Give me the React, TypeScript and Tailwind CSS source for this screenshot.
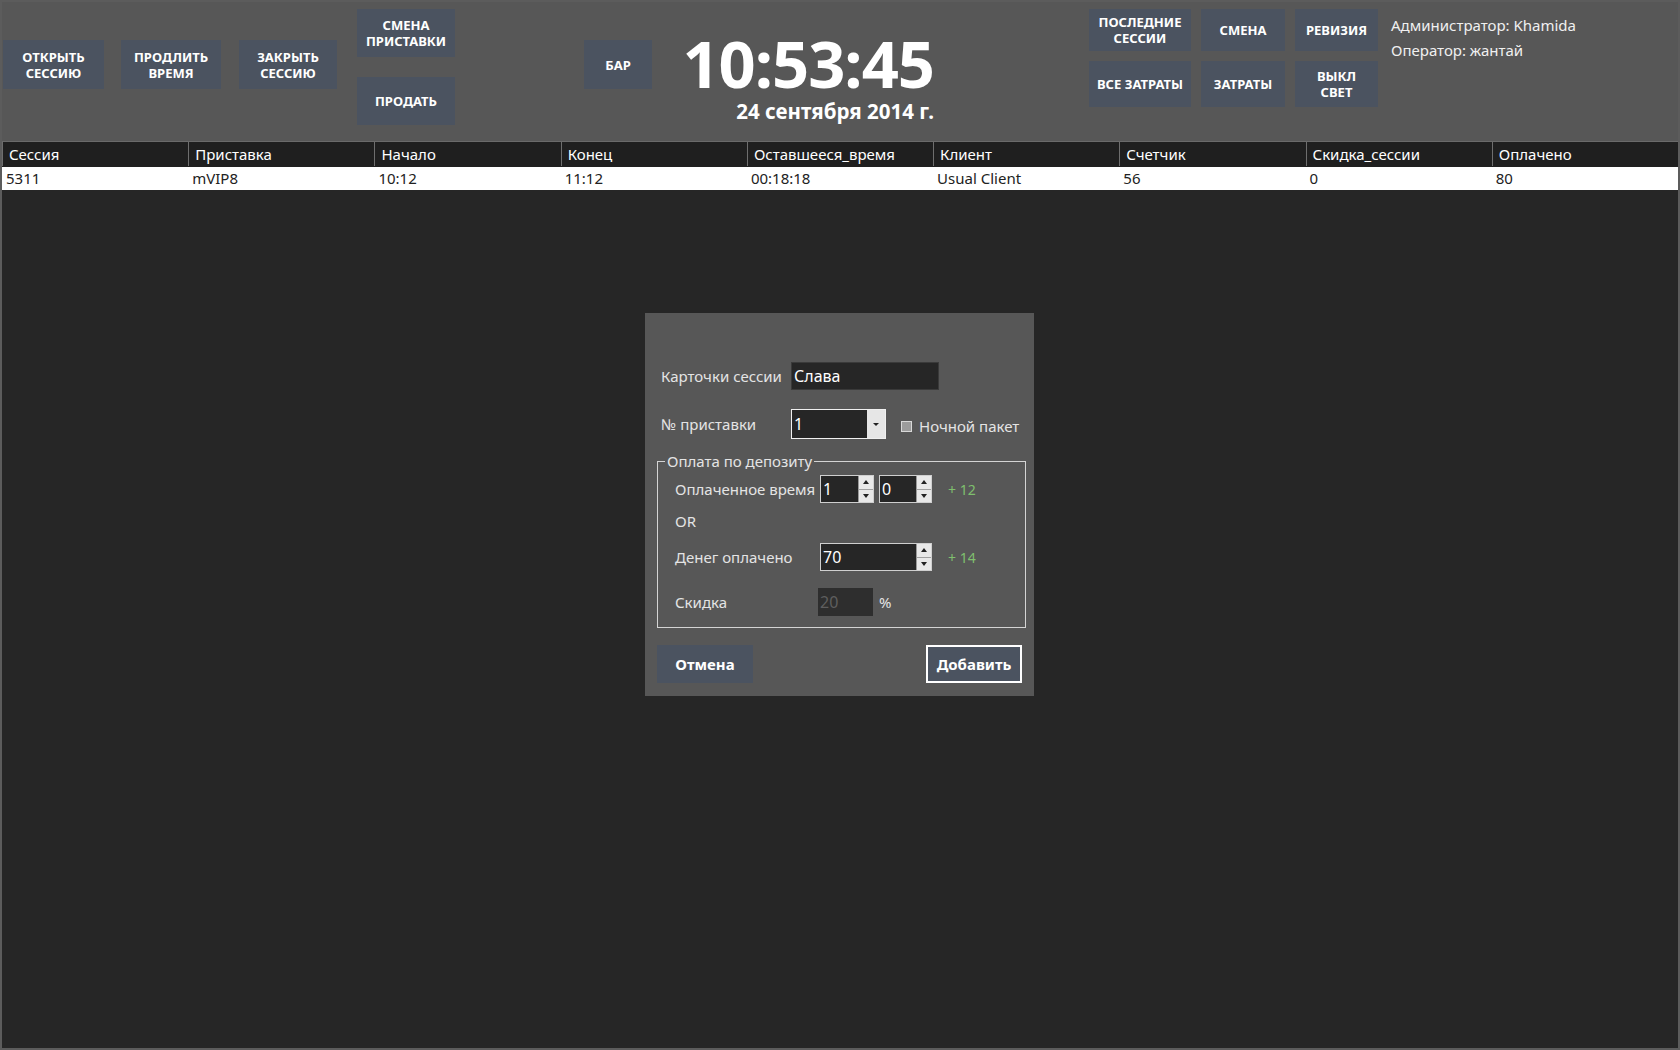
import React from 'react';

const btn =
    "bg-[#4b5360] text-white font-bold text-[13px] leading-[16px] uppercase flex items-center justify-center text-center";

const columns = ['Сессия', 'Приставка', 'Начало', 'Конец', 'Оставшееся_время', 'Клиент', 'Счетчик', 'Скидка_сессии', 'Оплачено'];
const row = ['5311', 'mVIP8', '10:12', '11:12', '00:18:18', 'Usual Client', '56', '0', '80'];

const Spinner = ({ value, width }: { value: string; width: string }) => (
    <div className={`${width} h-[28px] border border-[#cfcfcf] bg-[#262626] flex`}>
        <div className="flex-1 text-white text-[16px] leading-[26px] pl-[2px]">{value}</div>
        <div className="w-[15px] flex flex-col border-l border-[#9a9a9a]">
            <div className="flex-1 bg-[#e8e8e8] border-b border-[#a0a0a0] flex items-center justify-center">
                <span className="block w-0 h-0 border-l-[3px] border-r-[3px] border-b-[4px] border-l-transparent border-r-transparent border-b-[#222]" />
            </div>
            <div className="flex-1 bg-[#e8e8e8] flex items-center justify-center">
                <span className="block w-0 h-0 border-l-[3px] border-r-[3px] border-t-[4px] border-l-transparent border-r-transparent border-t-[#222]" />
            </div>
        </div>
    </div>
);

const App = () => {
    return (
        <div className="w-[1680px] h-[1050px] bg-[#262626] border-2 border-[#5c5c5c] flex flex-col relative overflow-hidden font-['Noto_Sans',sans-serif]">
            {/* Top bar */}
            <div className="h-[139px] bg-[#575757] flex items-start shrink-0">
                <div className={`${btn} w-[101px] h-[49px] ml-[1px] mt-[38px]`}>Открыть<br />сессию</div>
                <div className={`${btn} w-[100px] h-[49px] ml-[17px] mt-[38px]`}>Продлить<br />время</div>
                <div className={`${btn} w-[98px] h-[49px] ml-[18px] mt-[38px]`}>Закрыть<br />сессию</div>
                <div className="flex flex-col ml-[20px] mt-[7px] gap-[20px]">
                    <div className={`${btn} w-[98px] h-[48px]`}>Смена<br />приставки</div>
                    <div className={`${btn} w-[98px] h-[48px]`}>Продать</div>
                </div>
                <div className={`${btn} w-[68px] h-[49px] ml-[129px] mt-[38px]`}>Бар</div>
                <div className="flex flex-col items-end ml-[34px] mt-[28px] w-[248px]">
                    <div className="text-white font-bold text-[65px] leading-[66px] tracking-[-1px] whitespace-nowrap">10:53:45</div>
                    <div className="text-white font-bold text-[20.5px] leading-[24px] mt-[3px] whitespace-nowrap">24 сентября 2014 г.</div>
                </div>
                <div className="grid grid-cols-[102px_84px_83px] grid-rows-[42px_46px] gap-x-[10px] gap-y-[10px] ml-[155px] mt-[7px]">
                    <div className={btn}>Последние<br />сессии</div>
                    <div className={btn}>Смена</div>
                    <div className={btn}>Ревизия</div>
                    <div className={btn}>Все затраты</div>
                    <div className={btn}>Затраты</div>
                    <div className={btn}>Выкл<br />свет</div>
                </div>
                <div className="ml-[13px] mt-[11px] text-[#f0f0f0] text-[15px] leading-[25px]">
                    <div>Администратор: Khamida</div>
                    <div>Оператор: жантай</div>
                </div>
            </div>

            {/* Table */}
            <div className="border-t border-[#6a6a6a] shrink-0">
                <div className="grid grid-cols-9 bg-[#1f1f1f] h-[25px] border-b border-[#1f1f1f]">
                    {columns.map((c) => (
                        <div key={c} className="border-l border-[#6e6e6e] text-white text-[15px] leading-[24px] pl-[6px] whitespace-nowrap overflow-hidden">
                            {c}
                        </div>
                    ))}
                </div>
                <div className="grid grid-cols-9 bg-white h-[23px]">
                    {row.map((c, i) => (
                        <div key={i} className="text-[#222] text-[15px] leading-[23px] pl-[4px] whitespace-nowrap">
                            {c}
                        </div>
                    ))}
                </div>
            </div>

            {/* Dialog */}
            <div className="absolute left-[643px] top-[311px] w-[389px] h-[383px] bg-[#575757] text-[#e4e4e4] text-[15px] px-[12px] pt-[49px]">
                <div className="flex items-center h-[28px]">
                    <div className="w-[134px] pl-[4px]">Карточки сессии</div>
                    <div className="w-[148px] h-[28px] bg-[#262626] border border-[#3a3a3a] text-white text-[16px] leading-[26px] pl-[2px]">Слава</div>
                </div>
                <div className="flex items-center h-[30px] mt-[19px]">
                    <div className="w-[134px] pl-[4px]">№ приставки</div>
                    <div className="w-[95px] h-[30px] border border-[#f0f0f0] bg-[#262626] flex">
                        <div className="flex-1 text-white text-[16px] leading-[28px] pl-[2px]">1</div>
                        <div className="w-[18px] bg-[#e6e6e6] flex items-center justify-center">
                            <span className="block w-0 h-0 border-l-[3px] border-r-[3px] border-t-[3px] border-l-transparent border-r-transparent border-t-[#222]" />
                        </div>
                    </div>
                    <div className="ml-[15px] w-[11px] h-[11px] bg-[#9c9c9c] border border-[#d8d8d8] mt-[4px]" />
                    <div className="ml-[7px] mt-[4px]">Ночной пакет</div>
                </div>
                <div className="relative mt-[22px] border border-[#d4d4d4] h-[167px] mr-[-4px] pt-[13px] pl-[17px]">
                    <div className="absolute -top-[11px] left-[7px] bg-[#575757] px-[2px] leading-[20px]">Оплата по депозиту</div>
                    <div className="flex items-center h-[28px]">
                        <div className="w-[145px] whitespace-nowrap">Оплаченное время</div>
                        <Spinner value="1" width="w-[54px]" />
                        <div className="ml-[5px]"><Spinner value="0" width="w-[53px]" /></div>
                        <div className="ml-[16px] text-[#7fbf6e] text-[14px]">+ 12</div>
                    </div>
                    <div className="mt-[7px] leading-[22px]">OR</div>
                    <div className="flex items-center h-[30px] mt-[10px]">
                        <div className="w-[145px]">Денег оплачено</div>
                        <Spinner value="70" width="w-[112px]" />
                        <div className="ml-[16px] text-[#7fbf6e] text-[14px]">+ 14</div>
                    </div>
                    <div className="flex items-center h-[28px] mt-[16px]">
                        <div className="w-[143px]">Скидка</div>
                        <div className="w-[55px] h-[28px] bg-[#2e2e2e] text-[#5e5e5e] text-[16px] leading-[28px] pl-[2px]">20</div>
                        <div className="ml-[6px]">%</div>
                    </div>
                </div>
                <div className="flex justify-between mt-[17px]">
                    <div className="w-[96px] h-[38px] bg-[#4b5360] text-white font-bold text-[15px] flex items-center justify-center">Отмена</div>
                    <div className="w-[96px] h-[38px] bg-[#4b5360] border-2 border-white text-white font-bold text-[15px] flex items-center justify-center">Добавить</div>
                </div>
            </div>
        </div>
    );
};

export default App;
